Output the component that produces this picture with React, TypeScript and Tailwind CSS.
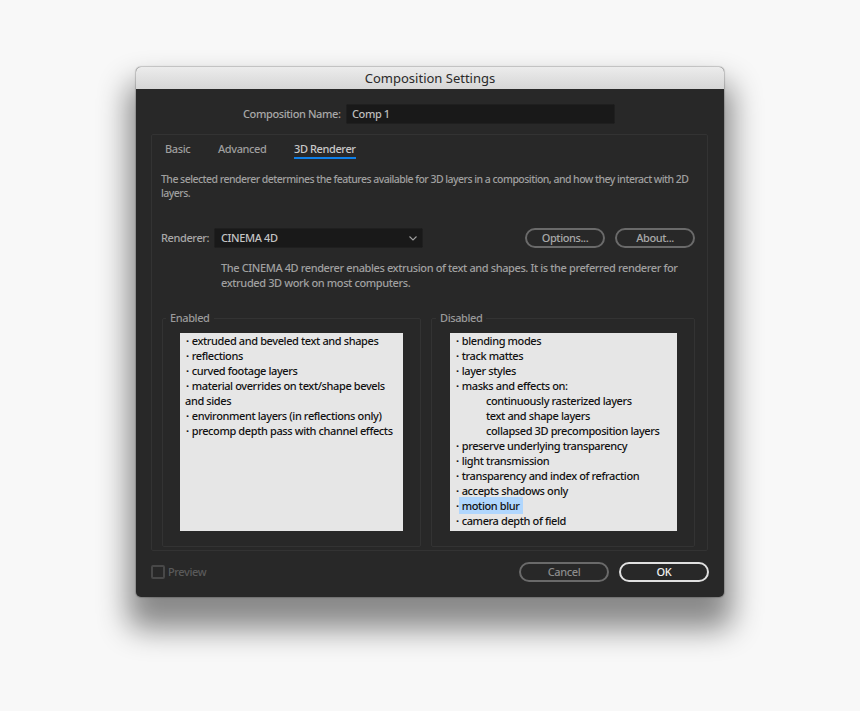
const enabled: { text: string; cont?: boolean }[] = [
  { text: "extruded and beveled text and shapes" },
  { text: "reflections" },
  { text: "curved footage layers" },
  { text: "material overrides on text/shape bevels" },
  { text: "and sides", cont: true },
  { text: "environment layers (in reflections only)" },
  { text: "precomp depth pass with channel effects" },
]

const disabled: { text: string; indent?: boolean; mark?: boolean }[] = [
  { text: "blending modes" },
  { text: "track mattes" },
  { text: "layer styles" },
  { text: "masks and effects on:" },
  { text: "continuously rasterized layers", indent: true },
  { text: "text and shape layers", indent: true },
  { text: "collapsed 3D precomposition layers", indent: true },
  { text: "preserve underlying transparency" },
  { text: "light transmission" },
  { text: "transparency and index of refraction" },
  { text: "accepts shadows only" },
  { text: "motion blur", mark: true },
  { text: "camera depth of field" },
]

function Dot() {
  return <span className="ml-[1px] mr-[3px] font-bold">·</span>
}

function Pill({ label, className }: { label: string; className: string }) {
  return (
    <button className={`flex h-[20px] items-center justify-center rounded-full border-2 ${className}`}>
      {label}
    </button>
  )
}

function Group({ title, className, labelClass, children }: { title: string; className: string; labelClass: string; children: React.ReactNode }) {
  return (
    <div className={`relative h-[229px] rounded-[2px] border border-[#333333] ${className}`}>
      <span className={`absolute -top-[8px] bg-[#282828] px-[4px] leading-[14px] text-[#9a9a9a] ${labelClass}`}>
        {title}
      </span>
      {children}
    </div>
  )
}

export default function App() {
  return (
    <div
      className="flex h-[711px] w-[860px] justify-center bg-[#f8f8f8] pt-[67px] text-[11px] font-medium tracking-[-0.39px]"
      style={{ fontFamily: '"Noto Sans", "Open Sans", sans-serif' }}
    >
      <div className="flex h-[530px] w-[588px] flex-col overflow-hidden rounded-[5px] bg-[#282828] shadow-[0_0_1px_1px_rgba(0,0,0,0.18),0_24px_30px_8px_rgba(0,0,0,0.45)]">
        <div className="flex h-[22px] shrink-0 items-center justify-center bg-gradient-to-b from-[#ececec] to-[#d6d6d6] text-[13px] font-normal leading-none tracking-normal text-[#2a2a2a]">
          Composition Settings
        </div>

        <div className="mt-[15px] flex h-[20px] shrink-0 items-center pl-[107px]">
          <span className="w-[103px] whitespace-nowrap text-[#a8a8a8]">Composition Name:</span>
          <div className="flex h-[20px] w-[269px] items-center rounded-[2px] border border-[#1f1f1f] bg-[#191919] pl-[5px] text-[#bdbdbd]">
            Comp 1
          </div>
        </div>

        <div className="ml-[15px] mt-[10px] h-[417px] w-[557px] shrink-0 rounded-[2px] border border-[#333333]">
          <div className="flex items-start pl-[13px] pt-[6px] leading-[16px]">
            <span className="w-[53px] text-[#9e9e9e]">Basic</span>
            <span className="w-[76px] text-[#9e9e9e]">Advanced</span>
            <span className="border-b-2 border-[#0f80e8] text-[#c8c8c8]">3D Renderer</span>
          </div>

          <p className="mt-[13px] w-[540px] pl-[9px] text-[10.5px] leading-[14px] tracking-[-0.53px] text-[#a0a0a0]">
            The selected renderer determines the features available for 3D layers in a composition, and how they interact with 2D layers.
          </p>

          <div className="mt-[28px] flex h-[20px] items-center pl-[9px]">
            <span className="w-[53px] text-[#a8a8a8]">Renderer:</span>
            <div className="flex h-[20px] w-[209px] items-center justify-between rounded-[2px] border border-[#1f1f1f] bg-[#191919] pl-[6px] pr-[4px] text-[#c4c4c4]">
              CINEMA 4D
              <svg width="10" height="10" viewBox="0 0 10 10" fill="none" stroke="#a0a0a0" strokeWidth="1.1">
                <path d="M1.5 3.5 5 7l3.5-3.5" />
              </svg>
            </div>
            <Pill label="Options..." className="ml-[102px] w-[80px] border-[#6a6a6a] text-[#a8a8a8]" />
            <Pill label="About..." className="ml-[10px] w-[80px] border-[#6a6a6a] text-[#a8a8a8]" />
          </div>

          <p className="mt-[12px] w-[480px] box-content pl-[69px] leading-[15px] text-[#a0a0a0]">
            The CINEMA 4D renderer enables extrusion of text and shapes. It is the preferred renderer for extruded 3D work on most computers.
          </p>

          <div className="mt-[28px] flex pl-[10px]">
            <Group title="Enabled" className="w-[259px]" labelClass="left-[3px]">
              <div className="ml-[17px] mt-[14px] h-[198px] w-[223px] bg-[#e6e6e6] px-[5px] leading-[15px] text-[#111111]">
                {enabled.map((t) => (
                  <div key={t.text}>{!t.cont && <Dot />}{t.text}</div>
                ))}
              </div>
            </Group>
            <Group title="Disabled" className="ml-[10px] w-[264px]" labelClass="left-[4px]">
              <div className="ml-[18px] mt-[14px] h-[198px] w-[227px] overflow-hidden bg-[#e6e6e6] px-[5px] leading-[15px] text-[#111111]">
                {disabled.map((d) =>
                  d.indent ? (
                    <div key={d.text} className="pl-[31px]">{d.text}</div>
                  ) : d.mark ? (
                    <div key={d.text}><Dot /><span className="-ml-[3px] bg-[#b0d6fd] py-[1px] pl-[3px] pr-[3px]">{d.text}</span></div>
                  ) : (
                    <div key={d.text}><Dot />{d.text}</div>
                  ),
                )}
              </div>
            </Group>
          </div>
        </div>

        <div className="mt-[11px] flex h-[20px] shrink-0 items-center pl-[15px] pr-[15px]">
          <span className="h-[14px] w-[14px] rounded-[2px] border-2 border-[#484848]" />
          <span className="ml-[3px] text-[#5a5a5a]">Preview</span>
          <Pill label="Cancel" className="ml-auto w-[90px] border-[#6a6a6a] text-[#8c8c8c]" />
          <Pill label="OK" className="ml-[10px] w-[90px] border-[#e0e0e0] text-[#f0f0f0]" />
        </div>
      </div>
    </div>
  )
}
